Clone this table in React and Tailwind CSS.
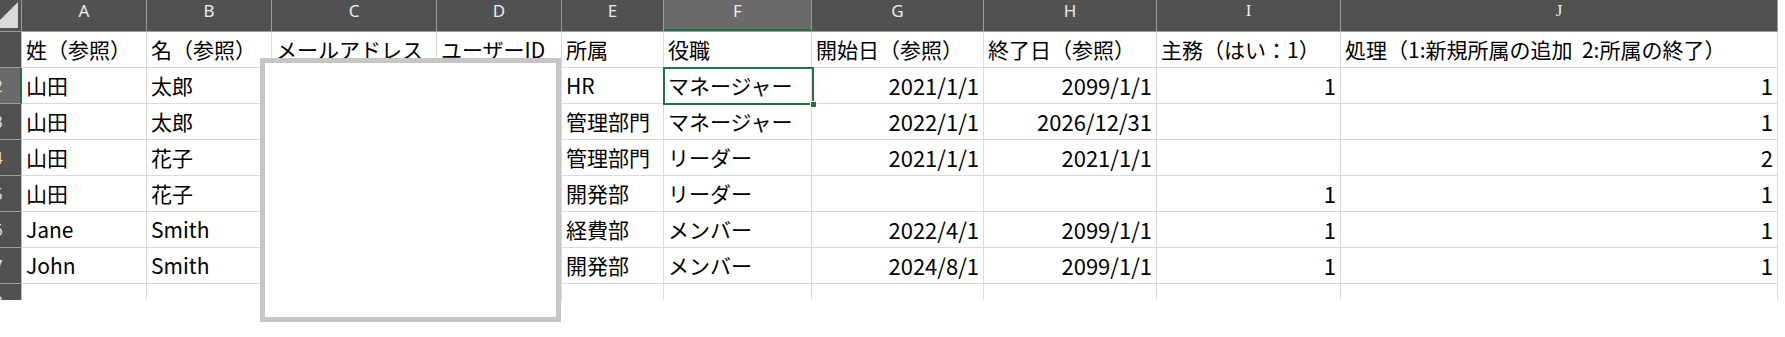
const cols = [
  { key: "A", w: 125 },
  { key: "B", w: 125 },
  { key: "C", w: 165 },
  { key: "D", w: 125 },
  { key: "E", w: 102 },
  { key: "F", w: 148 },
  { key: "G", w: 172 },
  { key: "H", w: 173 },
  { key: "I", w: 184, serif: true },
  { key: "J", w: 437, serif: true },
];

// cell values per row; numbers are right aligned
const rows = [
  ["姓（参照）", "名（参照）", "メールアドレス", "ユーザーID", "所属", "役職", "開始日（参照）", "終了日（参照）", "主務（はい：1）", "処理（1:新規所属の追加  2:所属の終了）"],
  ["山田", "太郎", "", "", "HR", "マネージャー", "2021/1/1", "2099/1/1", "1", "1"],
  ["山田", "太郎", "", "", "管理部門", "マネージャー", "2022/1/1", "2026/12/31", "", "1"],
  ["山田", "花子", "", "", "管理部門", "リーダー", "2021/1/1", "2021/1/1", "", "2"],
  ["山田", "花子", "", "", "開発部", "リーダー", "", "", "1", "1"],
  ["Jane", "Smith", "", "", "経費部", "メンバー", "2022/4/1", "2099/1/1", "1", "1"],
  ["John", "Smith", "", "", "開発部", "メンバー", "2024/8/1", "2099/1/1", "1", "1"],
];

const isNum = (v, r) => r > 0 && /^[0-9/]+$/.test(v);

function ColHeader() {
  return (
    <div className="flex h-[32px] bg-[#515151] border-b border-[#9c9c9c]">
      <div className="relative w-[22px] shrink-0 border-r border-[#9c9c9c] overflow-hidden">
        <svg width="22" height="31" className="absolute left-0 top-0">
          <polygon points="18,2 18,28 -8,28" fill="#d9d9d9" />
        </svg>
      </div>
      {cols.map((c) => (
        <div
          key={c.key}
          style={{ width: c.w }}
          className={
            "shrink-0 border-r border-[#9c9c9c] flex justify-center text-[17px] leading-[21px] text-[#ececec] " +
            (c.serif ? "font-['Liberation_Serif',serif] " : "font-['Noto_Sans',sans-serif] ") +
            (c.key === "F" ? "bg-[#6a6a6a] border-b-2 border-b-[#217346]" : "")
          }
        >
          {c.key}
        </div>
      ))}
    </div>
  );
}

function RowNum({ n }) {
  return (
    <span className="absolute left-[-12px] top-0 w-[20px] h-[35px] flex items-center justify-center text-[16px] text-[#e0e0e0] font-['Noto_Sans',sans-serif]">
      {n}
    </span>
  );
}

function Row({ cells, idx }) {
  const active = idx === 1;
  return (
    <div className="flex h-[36px]">
      <div
        className={
          "relative w-[22px] shrink-0 overflow-hidden border-b border-[#9c9c9c] " +
          (active ? "bg-[#6a6a6a] border-r-2 border-r-[#217346]" : "bg-[#515151] border-r border-r-[#bdbdbd]")
        }
      >
        <RowNum n={idx + 1} />
      </div>
      {cols.map((c, i) => {
        const v = cells[i];
        const num = isNum(v, idx);
        return (
          <div
            key={c.key}
            style={{ width: c.w }}
            className={
              "shrink-0 flex items-center border-r border-b border-[#dadada] whitespace-pre text-black font-['Noto_Sans_CJK_JP',sans-serif] " +
              (num ? "justify-end pr-[4px] text-[22px]" : "pl-[4px] text-[21px]")
            }
          >
            {v}
          </div>
        );
      })}
    </div>
  );
}

export default function App() {
  return (
    <div className="relative w-[1785px] h-[337px] bg-white overflow-hidden">
      <div className="relative w-[1778px] h-[300px] overflow-hidden">
        <ColHeader />
        {rows.map((r, i) => (
          <Row key={i} cells={r} idx={i} />
        ))}
        <div className="flex h-[16px]">
          <div className="relative w-[22px] shrink-0 overflow-hidden bg-[#515151] border-r border-[#bdbdbd]">
            <RowNum n={8} />
          </div>
          {cols.map((c) => (
            <div key={c.key} style={{ width: c.w }} className="shrink-0 border-r border-[#dadada]" />
          ))}
        </div>

        {/* active cell F2 */}
        <div className="absolute left-[663px] top-[67px] w-[151px] h-[38px] border-2 border-[#217346]">
          <div className="absolute right-[-5px] bottom-[-5px] w-[7px] h-[7px] bg-[#217346] border border-white" />
        </div>
      </div>

      {/* blank picture frame over C/D */}
      <div className="absolute left-[260px] top-[58px] w-[301px] h-[264px] bg-white border-[5px] border-[#c6c6c6]" />
    </div>
  );
}
